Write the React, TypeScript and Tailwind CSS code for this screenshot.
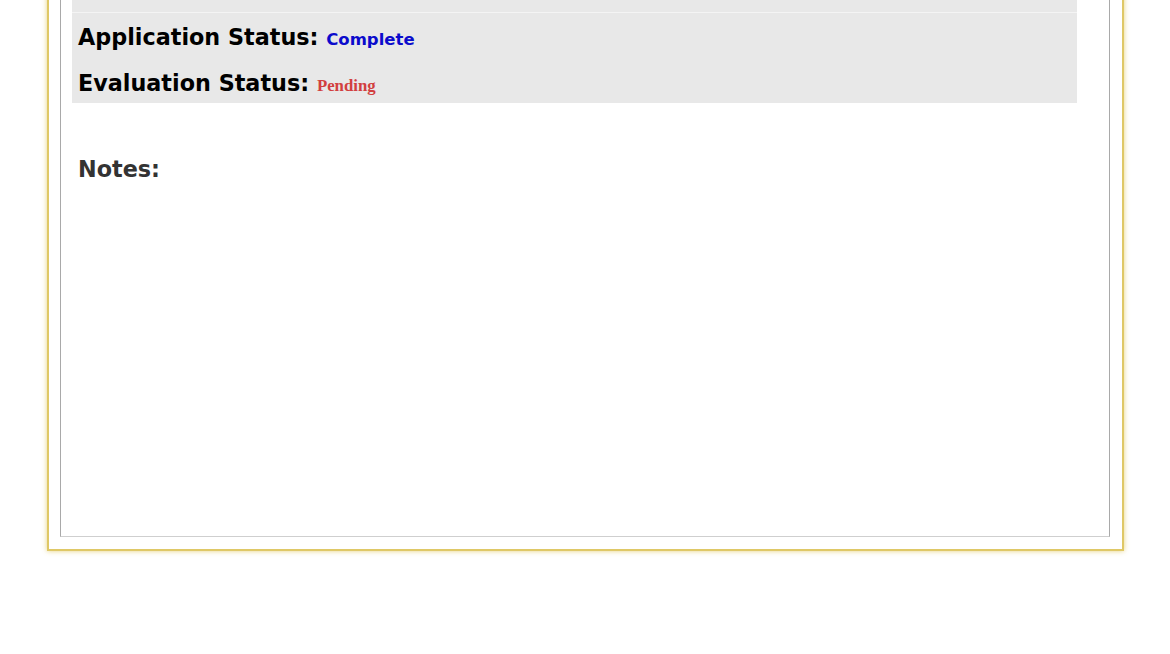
import React from "react";

export default function App() {
  return (
    <div className="h-[654px] w-[1170px] overflow-hidden bg-white">
      <div className="ml-[47px] mt-[-20px] w-[1077px] border-2 border-[#dfc866] bg-white pl-[11px] pr-[12px] pt-[11px] pb-[12px] shadow-[0_0_5px_rgba(225,200,100,0.85)]">
        <div className="h-[544px] border border-[#a9a9a9] border-b-[#cfcfcf] pl-[11px] pr-[32px]">
          <div className="bg-[#e8e8e8] font-['DejaVu_Sans',sans-serif]">
            <div className="h-[19px] border-b border-[#f4f4f4]" />
            <div className="px-[6px] pt-[11px] pb-[4px] leading-[26px]">
              <div className="text-[22.3px] font-bold text-black">
                Application Status:{" "}
                <span className="text-[16.5px] text-[#0b0bcc]">Complete</span>
              </div>
              <div className="mt-[17px] text-[22.3px] font-bold text-black">
                Evaluation Status:{" "}
                <span className="font-['Liberation_Serif',serif] text-[16.8px] text-[#d23f3f]">
                  Pending
                </span>
              </div>
            </div>
          </div>
          <div className="mt-[53px] pl-[6px] font-['DejaVu_Sans',sans-serif] text-[22.3px] font-bold leading-[26px] text-[#333333]">
            Notes:
          </div>
        </div>
      </div>
    </div>
  );
}
